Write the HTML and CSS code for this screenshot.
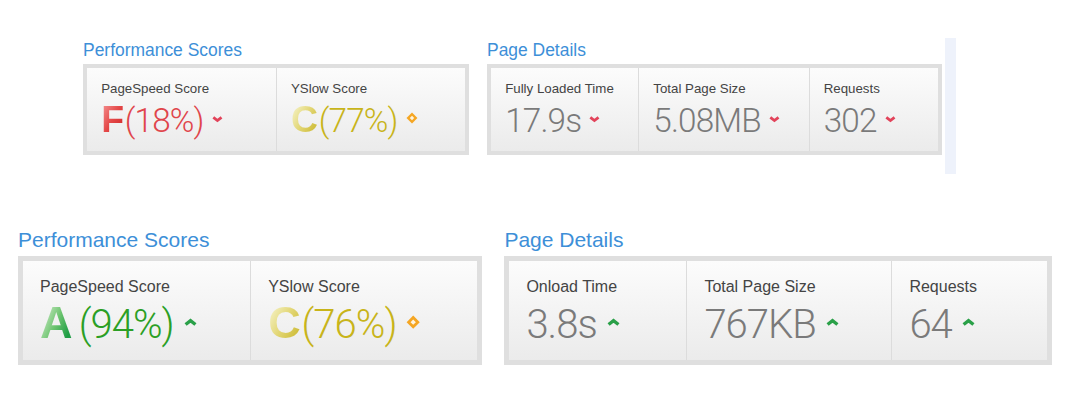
FILE: index.html
```html
<!DOCTYPE html>
<html lang="en">
<head>
    <meta charset="UTF-8">
    <title>Report Comparison</title>
    <link rel="stylesheet" href="styles.css">
</head>
<body>

    <!-- before: older, smaller report -->
    <section class="report report-old">
        <div class="group">
            <h2 class="group-title">Performance Scores</h2>
            <div class="box">
                <div class="cell cell-score">
                    <div class="label">PageSpeed Score</div>
                    <div class="value">
                        <span class="grade grade-f">F</span><span class="num num-red">(18%)</span><svg class="trend" viewBox="0 0 13 7"><polyline points="1.6,1.6 6.5,5.4 11.4,1.6" class="chev-down"/></svg>
                    </div>
                </div>
                <div class="cell cell-score">
                    <div class="label">YSlow Score</div>
                    <div class="value">
                        <span class="grade grade-c">C</span><span class="num num-yellow">(77%)</span><svg class="trend trend-same" viewBox="0 0 14 14"><path d="M7 .6 13.4 7 7 13.4 .6 7Z" fill="#f5a623"/><path d="M7 4.4 9.6 7 7 9.6 4.4 7Z" fill="#fff4df"/></svg>
                    </div>
                </div>
            </div>
        </div>

        <div class="group">
            <h2 class="group-title">Page Details</h2>
            <div class="box">
                <div class="cell cell-time">
                    <div class="label">Fully Loaded Time</div>
                    <div class="value">
                        <span class="num">17.9s</span><svg class="trend" viewBox="0 0 13 7"><polyline points="1.6,1.6 6.5,5.4 11.4,1.6" class="chev-down"/></svg>
                    </div>
                </div>
                <div class="cell cell-size">
                    <div class="label">Total Page Size</div>
                    <div class="value">
                        <span class="num">5.08MB</span><svg class="trend" viewBox="0 0 13 7"><polyline points="1.6,1.6 6.5,5.4 11.4,1.6" class="chev-down"/></svg>
                    </div>
                </div>
                <div class="cell cell-requests">
                    <div class="label">Requests</div>
                    <div class="value">
                        <span class="num">302</span><svg class="trend" viewBox="0 0 13 7"><polyline points="1.6,1.6 6.5,5.4 11.4,1.6" class="chev-down"/></svg>
                    </div>
                </div>
            </div>
        </div>

        <div class="edge"></div>
    </section>

    <!-- after: current report -->
    <section class="report report-new">
        <div class="group">
            <h2 class="group-title">Performance Scores</h2>
            <div class="box">
                <div class="cell cell-score">
                    <div class="label">PageSpeed Score</div>
                    <div class="value">
                        <span class="grade grade-a">A</span><span class="num num-green">(94%)</span><svg class="trend" viewBox="0 0 13 7"><polyline points="1.6,5.4 6.5,1.6 11.4,5.4" class="chev-up"/></svg>
                    </div>
                </div>
                <div class="cell cell-score">
                    <div class="label">YSlow Score</div>
                    <div class="value">
                        <span class="grade grade-c">C</span><span class="num num-yellow">(76%)</span><svg class="trend trend-same" viewBox="0 0 14 14"><path d="M7 .6 13.4 7 7 13.4 .6 7Z" fill="#f5a623"/><path d="M7 4.4 9.6 7 7 9.6 4.4 7Z" fill="#fff4df"/></svg>
                    </div>
                </div>
            </div>
        </div>

        <div class="group">
            <h2 class="group-title">Page Details</h2>
            <div class="box">
                <div class="cell cell-time">
                    <div class="label">Onload Time</div>
                    <div class="value">
                        <span class="num">3.8s</span><svg class="trend" viewBox="0 0 13 7"><polyline points="1.6,5.4 6.5,1.6 11.4,5.4" class="chev-up"/></svg>
                    </div>
                </div>
                <div class="cell cell-size">
                    <div class="label">Total Page Size</div>
                    <div class="value">
                        <span class="num">767KB</span><svg class="trend" viewBox="0 0 13 7"><polyline points="1.6,5.4 6.5,1.6 11.4,5.4" class="chev-up"/></svg>
                    </div>
                </div>
                <div class="cell cell-requests">
                    <div class="label">Requests</div>
                    <div class="value">
                        <span class="num">64</span><svg class="trend" viewBox="0 0 13 7"><polyline points="1.6,5.4 6.5,1.6 11.4,5.4" class="chev-up"/></svg>
                    </div>
                </div>
            </div>
        </div>
    </section>

</body>
</html>
```

FILE: styles.css
```css
body {
    margin: 0;
    background: #fff;
    font-family: "Liberation Sans", Arial, sans-serif;
    color: #444;
}

/* everything inside a report is sized in em so the old one can be smaller */
.report {
    display: flex;
    align-items: flex-start;
    font-size: 16px;
}

.report-old {
    font-size: 13.3px;
    padding: 41px 0 0 83px;
}

.report-new {
    padding: 54px 0 0 18px;
}

.group + .group {
    margin-left: 1.375em;
}

.group-title {
    margin: 0 0 0.19em;
    font-size: 1.3125em;
    font-weight: normal;
    line-height: 1.143;
    color: #3d8fd8;
}

.box {
    display: flex;
    border: 0.3125em solid #dfdfdf;
}

.cell {
    box-sizing: border-box;
    padding: 1.0625em 0 0.9375em 1.0625em;
    background: linear-gradient(#fcfcfc, #ebebeb);
}

.cell + .cell {
    border-left: 1px solid #dcdcdc;
}

.cell-score {
    width: 14.2em;
}

.cell-time {
    width: 11.0625em;
}

.cell-size {
    width: 12.8125em;
}

.cell-requests {
    width: 9.75em;
}

.label {
    line-height: 1.125em;
}

.value {
    margin-top: 0.089em;
    font-size: 2.8125em;
    line-height: 1;
    white-space: nowrap;
}

.grade {
    font-weight: bold;
    color: transparent;
    -webkit-background-clip: text;
    background-clip: text;
}

.grade-a {
    margin-right: 0.14em;
    background-image: linear-gradient(115deg, #cdeac6 15%, #6cc46f 50%, #1f9d45 80%);
}

.grade-c {
    margin-right: 0.02em;
    background-image: linear-gradient(120deg, #f4f1c2 15%, #e2d675 50%, #cdbb35 85%);
}

.grade-f {
    margin-right: 0.02em;
    background-image: linear-gradient(120deg, #f49090 10%, #e44848 50%, #d22a2a 85%);
}

.num {
    font-family: Roboto, "Liberation Sans", sans-serif;
    font-weight: 300;
    font-size: 0.89em;
    letter-spacing: -0.025em;
    color: #7a7a7a;
}

.num-green {
    color: #2b9f25;
}

.num-yellow {
    color: #c8b41a;
}

.num-red {
    color: #e0454b;
}

.trend {
    width: 0.29em;
    height: 0.16em;
    margin: 0 0 0.27em 0.22em;
    overflow: visible;
}

.trend-same {
    width: 0.32em;
    height: 0.32em;
    margin: 0 0 0.2em 0.22em;
}

.chev-down,
.chev-up {
    fill: none;
    stroke-width: 3.4;
}

.chev-down {
    stroke: #e2435a;
}

.chev-up {
    stroke: #2aa048;
}

/* pale strip at the right of the old report */
.edge {
    width: 11px;
    height: 136px;
    margin: -3px 0 0 3px;
    background: #eef2fb;
}
```
